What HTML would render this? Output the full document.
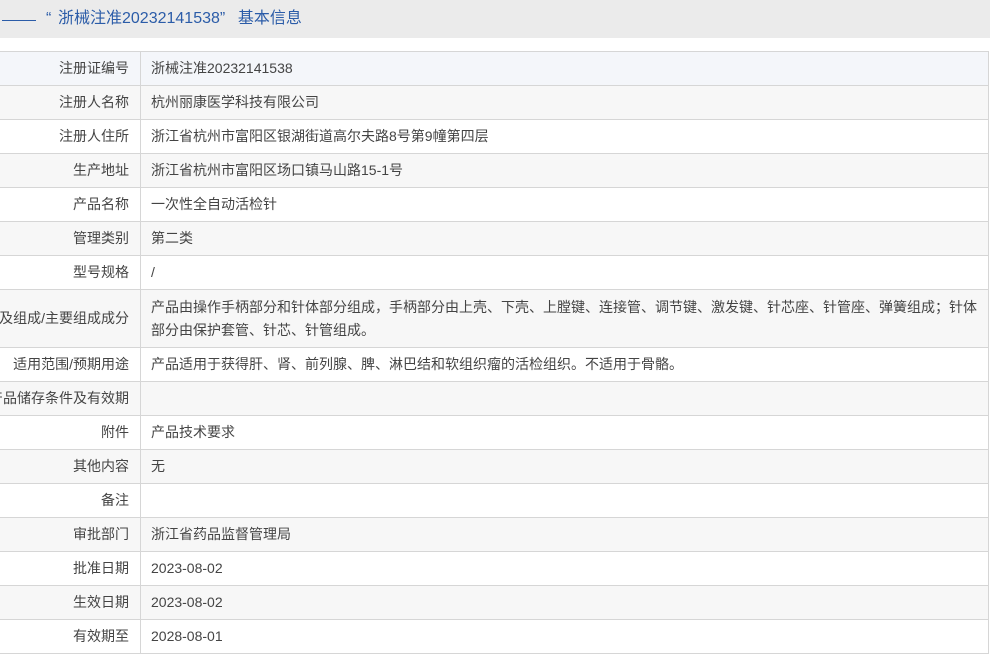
<!DOCTYPE html>
<html><head><meta charset="utf-8"><style>
body{margin:0;width:990px;height:644px;overflow:hidden;background:#fff;font-family:"Liberation Sans","Noto Sans CJK SC",sans-serif;}
.hd{position:absolute;left:0;top:0;width:990px;height:38px;background:#ebebeb;color:#2b5ca8;font-size:16px;line-height:38px;}
.hd .ln{position:absolute;left:2px;top:20px;width:34px;height:1px;background:#2b5ca8;}
.hd span{position:absolute;left:46px;top:0;}
.hd i{font-style:normal;display:inline-block;width:12px;}
table{position:absolute;left:-80px;top:51px;width:1069px;border-collapse:collapse;font-size:14px;color:#444;}
td{border:1px solid #d6d6d6;height:33px;padding:0 10px;line-height:23px;}
td.l{width:198px;text-align:right;padding-right:11px;white-space:nowrap;}
tr:nth-child(even) td{background:#f7f7f7;}
tr.h td{background:#f4f6fa;}
</style></head><body>
<div class="hd"><div class="ln"></div><span><i>“</i>浙械注准20232141538<i style="width:18px">”</i>基本信息</span></div>
<table>
<tr class="h"><td class="l">注册证编号</td><td>浙械注准20232141538</td></tr>
<tr><td class="l">注册人名称</td><td>杭州丽康医学科技有限公司</td></tr>
<tr><td class="l">注册人住所</td><td>浙江省杭州市富阳区银湖街道高尔夫路8号第9幢第四层</td></tr>
<tr><td class="l">生产地址</td><td>浙江省杭州市富阳区场口镇马山路15-1号</td></tr>
<tr><td class="l">产品名称</td><td>一次性全自动活检针</td></tr>
<tr><td class="l">管理类别</td><td>第二类</td></tr>
<tr><td class="l">型号规格</td><td>/</td></tr>
<tr><td class="l" style="height:57px">结构及组成/主要组成成分</td><td>产品由操作手柄部分和针体部分组成，手柄部分由上壳、下壳、上膛键、连接管、调节键、激发键、针芯座、针管座、弹簧组成；针体部分由保护套管、针芯、针管组成。</td></tr>
<tr><td class="l">适用范围/预期用途</td><td>产品适用于获得肝、肾、前列腺、脾、淋巴结和软组织瘤的活检组织。不适用于骨骼。</td></tr>
<tr><td class="l">产品储存条件及有效期</td><td></td></tr>
<tr><td class="l">附件</td><td>产品技术要求</td></tr>
<tr><td class="l">其他内容</td><td>无</td></tr>
<tr><td class="l">备注</td><td></td></tr>
<tr><td class="l">审批部门</td><td>浙江省药品监督管理局</td></tr>
<tr><td class="l">批准日期</td><td>2023-08-02</td></tr>
<tr><td class="l">生效日期</td><td>2023-08-02</td></tr>
<tr><td class="l">有效期至</td><td>2028-08-01</td></tr>
</table>
</body></html>
